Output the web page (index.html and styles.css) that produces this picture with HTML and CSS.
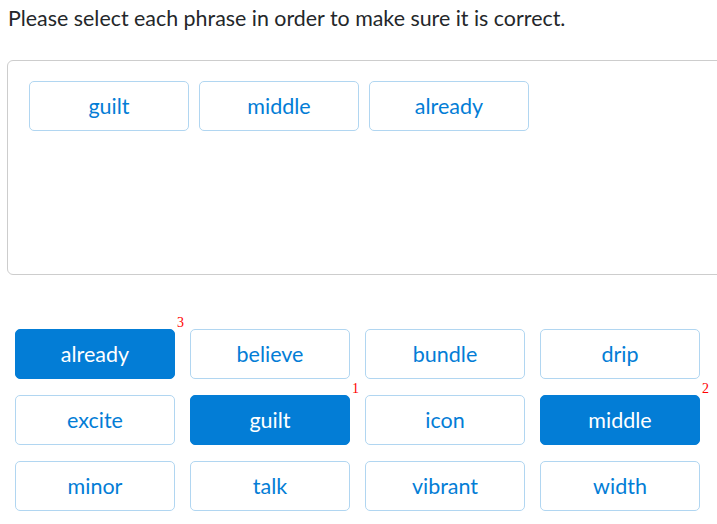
FILE: index.html
```html
<!DOCTYPE html>
<html lang="en">
<head>
    <meta charset="UTF-8">
    <title>Confirm Secret Backup Phrase</title>
    <link rel="stylesheet" href="styles.css">
</head>
<body>
    <p class="prompt">Please select each phrase in order to make sure it is correct.</p>

    <!-- selected words -->
    <div class="drop-area">
        <div class="chip">guilt</div>
        <div class="chip">middle</div>
        <div class="chip">already</div>
    </div>

    <!-- word choices -->
    <div class="word-grid">
        <div class="word selected">already<span class="badge">3</span></div>
        <div class="word">believe</div>
        <div class="word">bundle</div>
        <div class="word">drip</div>
        <div class="word">excite</div>
        <div class="word selected">guilt<span class="badge">1</span></div>
        <div class="word">icon</div>
        <div class="word selected">middle<span class="badge">2</span></div>
        <div class="word">minor</div>
        <div class="word">talk</div>
        <div class="word">vibrant</div>
        <div class="word">width</div>
    </div>
</body>
</html>
```

FILE: styles.css
```css
body {
    margin: 0;
    font-family: Lato, "Open Sans", sans-serif;
    background-color: #fff;
    color: #24272a;
    overflow-x: hidden;
}

.prompt {
    margin: 0;
    padding: 5px 8px 0;
    font-size: 21.4px;
    line-height: 26px;
    height: 55px;
}

/* Feld mit den schon gewählten Wörtern */
.drop-area {
    margin-left: 7px;
    width: 760px;
    height: 215px;
    border: 1px solid #cdcdcd;
    border-radius: 6px;
    padding: 20px 21px;
    box-sizing: border-box;
    display: flex;
    flex-wrap: wrap;
    align-content: flex-start;
    gap: 10px;
}

.chip,
.word {
    width: 160px;
    height: 50px;
    box-sizing: border-box;
    border: 1px solid #b1d6f1;
    border-radius: 5px;
    color: #037dd6;
    font-size: 21.5px;
    display: flex;
    align-items: center;
    justify-content: center;
}

.word-grid {
    margin-top: 54px;
    padding-left: 15px;
    display: grid;
    grid-template-columns: repeat(4, 160px);
    column-gap: 15px;
    row-gap: 16px;
}

.word {
    position: relative;
}

.word.selected {
    background-color: #037dd6;
    border-color: #037dd6;
    color: #fff;
}

/* Reihenfolge-Nummer oben rechts */
.badge {
    position: absolute;
    left: 161px;
    top: -15px;
    color: red;
    font-family: "Liberation Serif", serif;
    font-size: 14px;
    line-height: 16px;
}
```
